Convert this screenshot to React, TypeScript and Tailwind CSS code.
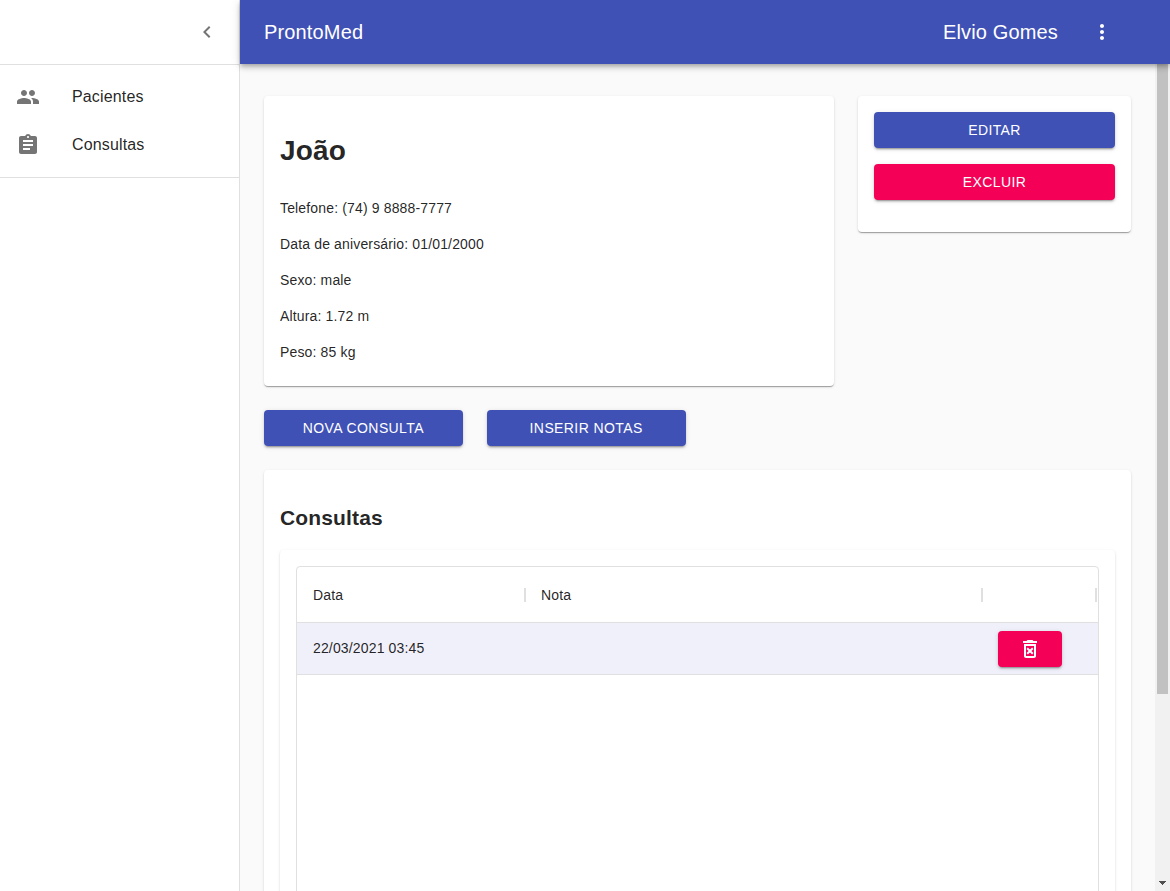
import React from "react";

const PEOPLE =
  "M16 11c1.66 0 2.99-1.34 2.99-3S17.66 5 16 5c-1.66 0-3 1.34-3 3s1.34 3 3 3zm-8 0c1.66 0 2.99-1.34 2.99-3S9.66 5 8 5C6.34 5 5 6.34 5 8s1.34 3 3 3zm0 2c-2.33 0-7 1.17-7 3.5V19h14v-2.5c0-2.33-4.67-3.5-7-3.5zm8 0c-.29 0-.62.02-.97.05 1.16.84 1.97 1.97 1.97 3.45V19h6v-2.5c0-2.33-4.67-3.5-7-3.5z";
const ASSIGNMENT =
  "M19 3h-4.18C14.4 1.84 13.3 1 12 1c-1.3 0-2.4.84-2.82 2H5c-1.1 0-2 .9-2 2v14c0 1.1.9 2 2 2h14c1.1 0 2-.9 2-2V5c0-1.1-.9-2-2-2zm-7 0c.55 0 1 .45 1 1s-.45 1-1 1-1-.45-1-1 .45-1 1-1zm2 14H7v-2h7v2zm3-4H7v-2h10v2zm0-4H7V7h10v2z";
const CHEVRON_LEFT = "M15.41 7.41L14 6l-6 6 6 6 1.41-1.41L10.83 12z";
const MORE_VERT =
  "M12 8c1.1 0 2-.9 2-2s-.9-2-2-2-2 .9-2 2 .9 2 2 2zm0 2c-1.1 0-2 .9-2 2s.9 2 2 2 2-.9 2-2-.9-2-2-2zm0 6c-1.1 0-2 .9-2 2s.9 2 2 2 2-.9 2-2-.9-2-2-2z";
const DELETE_FOREVER =
  "M14.12 10.47L12 12.59l-2.13-2.12-1.41 1.41L10.59 14l-2.12 2.12 1.41 1.41L12 15.41l2.12 2.12 1.41-1.41L13.41 14l2.12-2.12zM15.5 4l-1-1h-5l-1 1H5v2h14V4zM6 19c0 1.1.9 2 2 2h8c1.1 0 2-.9 2-2V7H6v12zM8 9h8v10H8V9z";

function Icon({ path }: { path: string }) {
  return (
    <svg viewBox="0 0 24 24" className="block size-6 shrink-0" fill="currentColor" aria-hidden="true">
      <path d={path} />
    </svg>
  );
}

function Paper({ className = "", children }: { className?: string; children: React.ReactNode }) {
  return (
    <div
      className={`rounded-[4px] bg-white p-4 shadow-[0px_2px_1px_-1px_rgba(0,0,0,0.2),0px_1px_1px_0px_rgba(0,0,0,0.14),0px_1px_3px_0px_rgba(0,0,0,0.12)] ${className}`}
    >
      {children}
    </div>
  );
}

function Button({ className = "", children }: { className?: string; children: React.ReactNode }) {
  return (
    <button
      className={`flex h-9 items-center justify-center rounded-[4px] text-[14px] leading-[24.5px] tracking-[0.02857em] text-white uppercase shadow-[0px_3px_1px_-2px_rgba(0,0,0,0.2),0px_2px_2px_0px_rgba(0,0,0,0.14),0px_1px_5px_0px_rgba(0,0,0,0.12)] ${className}`}
    >
      {children}
    </button>
  );
}

function NavItem({ path, label }: { path: string; label: string }) {
  return (
    <li className="flex h-12 items-center px-4 text-[16px] leading-6 tracking-[0.00938em]">
      <span className="w-14 text-[#757575]">
        <Icon path={path} />
      </span>
      {label}
    </li>
  );
}

function HeaderCell({ className, label = "" }: { className: string; label?: string }) {
  return (
    <div className={`flex items-center justify-between pt-px pl-4 ${className}`}>
      <span className="leading-5">{label}</span>
      <span className="-mr-px h-3.5 w-0.5 bg-[#e0e0e0]" />
    </div>
  );
}

const details = [
  "Telefone: (74) 9 8888-7777",
  "Data de aniversário: 01/01/2000",
  "Sexo: male",
  "Altura: 1.72 m",
  "Peso: 85 kg",
];

export default function App() {
  return (
    <div className="flex h-[891px] w-[1170px] overflow-hidden bg-[#fafafa] font-['Liberation_Sans',Arial,sans-serif] text-[14px] leading-[1.43] tracking-[0.01071em] text-black/87 antialiased">
      <aside className="w-60 shrink-0 border-r border-[#e0e0e0] bg-white">
        <div className="flex h-16 items-center justify-end pr-5 text-[#757575]">
          <Icon path={CHEVRON_LEFT} />
        </div>
        <ul className="border-y border-[#e0e0e0] py-2">
          <NavItem path={PEOPLE} label="Pacientes" />
          <NavItem path={ASSIGNMENT} label="Consultas" />
        </ul>
      </aside>

      <div className="flex min-w-0 flex-1 flex-col">
        <header className="relative z-10 flex h-16 shrink-0 items-center bg-[#3f51b5] pr-14 pl-6 text-[20px] leading-8 tracking-[0.0075em] text-white shadow-[0px_2px_4px_-1px_rgba(0,0,0,0.2),0px_4px_5px_0px_rgba(0,0,0,0.14),0px_1px_10px_0px_rgba(0,0,0,0.12)]">
          <h1 className="flex-1">ProntoMed</h1>
          <span className="mr-8">Elvio Gomes</span>
          <Icon path={MORE_VERT} />
        </header>

        <div className="flex min-h-0 flex-1">
          <main className="flex min-w-0 flex-1 flex-col gap-6 overflow-hidden px-6 pt-8">
            <div className="flex items-start gap-6">
              <Paper className="h-[290px] w-[570px]">
                <h2 className="my-[18.76px] text-[28px] leading-[1.43] font-bold">João</h2>
                {details.map((line) => (
                  <p key={line} className="py-2">
                    {line}
                  </p>
                ))}
              </Paper>
              <Paper className="flex h-[136px] w-[273px] flex-col gap-4">
                <Button className="bg-[#3f51b5]">Editar</Button>
                <Button className="bg-[#f50057]">Excluir</Button>
              </Paper>
            </div>

            <div className="flex gap-6">
              <Button className="w-[198.75px] bg-[#3f51b5]">Nova consulta</Button>
              <Button className="w-[198.75px] bg-[#3f51b5]">Inserir notas</Button>
            </div>

            <Paper className="h-[520px] w-[867px] shrink-0">
              <h3 className="mt-[17.43px] mb-[16.5px] text-[21px] leading-[1.43] font-bold">Consultas</h3>
              <Paper className="h-[440px]">
                <div className="h-[400px] rounded-[4px] border border-[#e0e0e0]">
                  <div className="flex h-14 border-b border-[#e0e0e0]">
                    <HeaderCell className="w-[228px]" label="Data" />
                    <HeaderCell className="w-[457px]" label="Nota" />
                    <HeaderCell className="w-[114px]" />
                  </div>
                  <div className="flex h-[52px] border-b border-[#e0e0e0] bg-[#f0f0fa]">
                    <div className="w-[685px] pl-4 leading-[51px]">22/03/2021 03:45</div>
                    <div className="pt-2 pl-4">
                      <Button className="w-16 bg-[#f50057]">
                        <Icon path={DELETE_FOREVER} />
                      </Button>
                    </div>
                  </div>
                </div>
              </Paper>
            </Paper>
          </main>

          <div className="flex w-[15px] shrink-0 flex-col justify-between bg-[#f1f1f1] pr-0.5 pb-1.5 pl-0.5">
            <div className="h-[630px] bg-[#c1c1c1]" />
            <svg viewBox="0 0 7 4" className="ml-0.5 block h-1 w-[7px]" shapeRendering="crispEdges" aria-hidden="true">
              <path d="M0 0h7v1H6v1H5v1H4v1H3V3H2V2H1V1H0z" fill="#505050" />
            </svg>
          </div>
        </div>
      </div>
    </div>
  );
}
